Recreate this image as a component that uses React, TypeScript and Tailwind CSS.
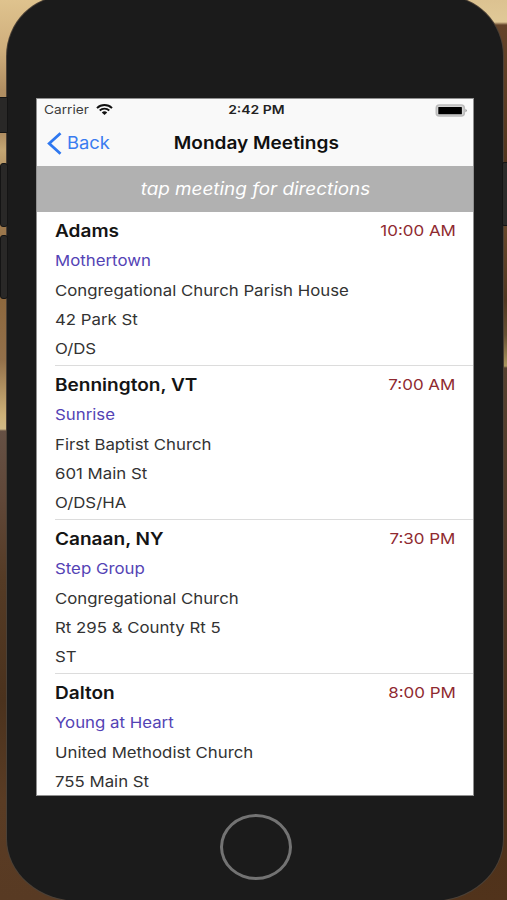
import { clsx } from "clsx";

interface Meeting {
  town: string;
  time: string;
  name: string;
  place: string;
  street: string;
  codes?: string;
}

const meetings: Meeting[] = [
  { town: "Adams", time: "10:00 AM", name: "Mothertown", place: "Congregational Church Parish House", street: "42 Park St", codes: "O/DS" },
  { town: "Bennington, VT", time: "7:00 AM", name: "Sunrise", place: "First Baptist Church", street: "601 Main St", codes: "O/DS/HA" },
  { town: "Canaan, NY", time: "7:30 PM", name: "Step Group", place: "Congregational Church", street: "Rt 295 & County Rt 5", codes: "ST" },
  { town: "Dalton", time: "8:00 PM", name: "Young at Heart", place: "United Methodist Church", street: "755 Main St" },
];

function Line({ text, className }: { text: string; className?: string }) {
  return (
    <div className={clsx("h-[29.3px] whitespace-nowrap text-[15px] leading-[29.3px]", className)}>
      <span className="inline-block origin-left scale-x-[1.12]">{text}</span>
    </div>
  );
}

function MeetingRow({ meeting }: { meeting: Meeting }) {
  return (
    <li className="ml-[17.5px] h-[154px] border-b border-[#dcdcdc] pt-[4.4px] text-[#333333]">
      <div className="flex h-[30px] items-center justify-between pr-[17.5px] leading-[30px]">
        <span className="origin-left scale-x-[1.12] text-[17px] font-semibold text-[#141414]">{meeting.town}</span>
        <span className="origin-right scale-x-[1.13] text-[15px] text-[#8f2a30]">{meeting.time}</span>
      </div>
      <Line text={meeting.name} className="text-[#5443b5]" />
      <Line text={meeting.place} />
      <Line text={meeting.street} />
      {meeting.codes && <Line text={meeting.codes} />}
    </li>
  );
}

function StatusBar() {
  return (
    <div className="grid h-[22px] grid-cols-[1fr_auto_1fr] items-center pr-[6px] pl-[7px] text-[12px] leading-[22px]">
      <div className="flex items-center">
        <span className="w-[45px] origin-left scale-x-[1.14] text-[#3c3c3c]">Carrier</span>
        <svg width="17" height="12" viewBox="0 0 17 12" className="ml-[6.5px]" fill="none" stroke="#111111">
          <path d="M1 4.1C5.2.1 11.8.1 16 4.1" strokeWidth="2" />
          <path d="M3.7 6.5C6.4 4 10.6 4 13.3 6.5" strokeWidth="1.8" />
          <path d="M5.8 8.4C7.4 6.9 9.6 6.9 11.2 8.4L8.5 11Z" fill="#111111" stroke="none" />
        </svg>
      </div>
      <span className="pl-[1px] scale-x-[1.16] font-semibold text-[#222222]">2:42 PM</span>
      <svg width="32" height="13" viewBox="0 0 32 13" className="justify-self-end">
        <rect x="1.3" y="1" width="28" height="11" rx="3" fill="#d5d5d5" stroke="#bcbcbc" strokeWidth="1.6" />
        <rect x="3.3" y="3" width="23.6" height="7.2" rx="0.5" fill="#000000" />
        <path d="M30.5 4.7Q33 6.5 30.5 8.3Z" fill="#8a8a8a" />
      </svg>
    </div>
  );
}

function NavBar() {
  return (
    <div className="grid h-[45px] grid-cols-[1fr_auto_1fr] items-center">
      <div className="flex items-center pl-[10px] text-[#3a7cf0]">
        <svg width="15" height="23" viewBox="0 0 15 23" fill="none" stroke="#2f78f0" strokeWidth="2.8">
          <path d="M13.5 1.2L2.2 11.5L13.5 21.8" />
        </svg>
        <span className="ml-[5px] origin-left scale-x-[1.08] text-[17px]">Back</span>
      </div>
      <h1 className="scale-x-[1.12] pl-[1.5px] text-[17px] font-semibold whitespace-nowrap text-[#101010]">Monday Meetings</h1>
    </div>
  );
}

export default function App() {
  return (
    <div className="relative h-[900px] w-[507px] overflow-hidden bg-[#503620] font-['Inter','Liberation_Sans',sans-serif]">
      <div className="absolute inset-y-0 left-0 w-[60px] bg-[linear-gradient(180deg,#dfc38e_0px,#cfae7c_50px,#b08e62_90px,#aa885d_130px,#c4a673_150px,#a48054_190px,#8d683e_300px,#93704a_360px,#cdb178_415px,#d0b985_429px,#655044_431px,#604738_500px,#553b25_580px,#4b321d_700px,#5a3c24_800px,#583a23_900px)]" />
      <div className="absolute inset-y-0 right-0 w-[60px] bg-[linear-gradient(180deg,#dcc291_0px,#e0c997_22px,#634329_25px,#5b3c23_100px,#51351d_160px,#65462a_230px,#503720_300px,#655032_335px,#aa965e_366px,#55402e_368px,#4f3625_600px,#4a3019_750px,#51331b_900px)]" />

      <div className="relative mt-[-4px] ml-[7px] flex h-[905px] w-[496px] flex-col items-center rounded-t-[60px] rounded-b-[72px_62px] bg-[#1b1b1b] pt-[102px] shadow-[0_0_0_1px_#4b4036]">
        <main className="h-[698px] w-[438px] overflow-hidden border border-[#909090] bg-white">
          <header className="bg-[#f9f9f9]">
            <StatusBar />
            <NavBar />
          </header>
          <div className="flex h-[46px] items-center justify-center bg-[#b1b1b1] pt-[1px] text-[17px] text-white italic">
            <span className="scale-x-[1.11]">tap meeting for directions</span>
          </div>
          <ul>
            {meetings.map((meeting) => (
              <MeetingRow key={meeting.town} meeting={meeting} />
            ))}
          </ul>
        </main>
        <div className="mt-[18px] ml-px h-[66px] w-[72px] rounded-[50%] border-[3px] border-[#737373]" />
      </div>

      <div className="absolute top-[97px] left-[-4px] h-[36px] w-[12px] rounded-l-[4px] border border-[#141414] bg-[#292827]" />
      <div className="absolute top-[163px] left-0 h-[64px] w-[8px] rounded-[3px] border border-[#141414] bg-[#292827]" />
      <div className="absolute top-[235px] left-0 h-[64px] w-[8px] rounded-[3px] border border-[#141414] bg-[#292827]" />
      <div className="absolute top-[162px] right-[-4px] h-[64px] w-[9px] rounded-[2px] border border-[#141414] bg-[#2c2b2a]" />
    </div>
  );
}
